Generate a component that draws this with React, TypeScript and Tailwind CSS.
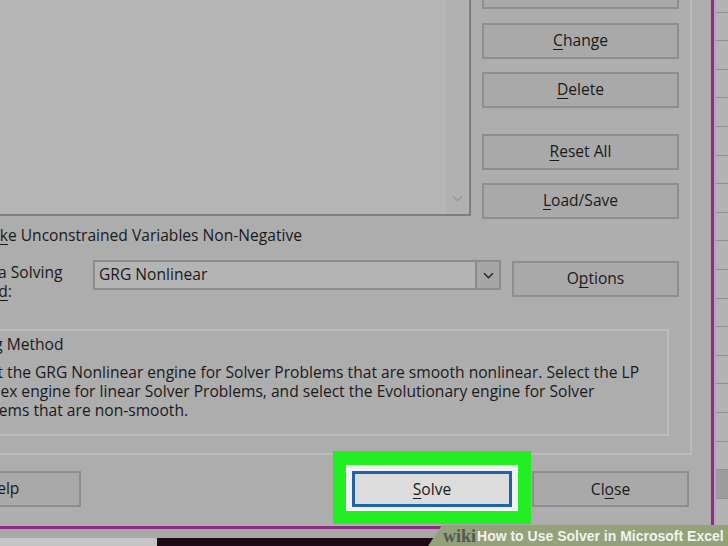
import type { ReactNode } from "react";

function Btn({ children, className = "" }: { children: ReactNode; className?: string }) {
  return (
    <div
      className={`flex h-[36px] shrink-0 items-center justify-center border-2 border-[#8e8e8e] bg-[#a9a9a9] text-[15.6px] text-[#1a1a1a] ${className}`}
    >
      {children}
    </div>
  );
}

function Key({ children }: { children: ReactNode }) {
  return <span className="underline decoration-1 underline-offset-[3px]">{children}</span>;
}

function Chevron({ className = "" }: { className?: string }) {
  return (
    <svg viewBox="0 0 12 8" className={className} fill="none" stroke="currentColor" strokeWidth="1.6">
      <polyline points="1,1.5 6,6.5 11,1.5" />
    </svg>
  );
}

const rows = Array.from({ length: 20 }, (_, i) => i);

export default function App() {
  return (
    <div className="relative h-[546px] w-[728px] overflow-hidden bg-[#a9a9a9] font-['Open_Sans',sans-serif] text-[#1a1a1a]">
      <div className="flex h-[529px]">
        {/* dialog */}
        <div className="flex w-[714px] shrink-0 flex-col border-r-[3px] border-b-[3px] border-[#8d2f7f] bg-[#adadad]">
          {/* inner panel */}
          <div className="flex h-[455px] w-[692px] flex-col border-r-2 border-b-2 border-[#bababa]">
            <div className="flex items-start">
              <div className="flex h-[216px] w-[471px] justify-end border-r-2 border-b-2 border-[#7f7f7f] bg-[#b5b5b5]">
                <div className="flex w-[23px] items-end justify-center bg-[#b1b1b1] pb-[12px]">
                  <Chevron className="h-[7px] w-[11px] text-[#999999]" />
                </div>
              </div>
              <div className="-mt-[27px] ml-[11px] flex w-[197px] flex-col">
                <Btn>Add</Btn>
                <Btn className="mt-[14px]">
                  <Key>C</Key>hange
                </Btn>
                <Btn className="mt-[13px]">
                  <Key>D</Key>elete
                </Btn>
                <Btn className="mt-[26px]">
                  <Key>R</Key>eset All
                </Btn>
                <Btn className="mt-[13px]">
                  <Key>L</Key>oad/Save
                </Btn>
              </div>
            </div>

            <div className="-ml-[23px] mt-[6px] whitespace-nowrap text-[15.6px] leading-[20px]">
              Ma<Key>k</Key>e Unconstrained Variables Non-Negative
            </div>

            <div className="mt-[15px] flex items-start">
              <div className="-ml-[49px] mt-[3px] w-[142px] shrink-0 whitespace-nowrap text-[15.6px] leading-[19px]">
                Select a Solving
                <br />
                Metho<Key>d</Key>:
              </div>
              <div className="flex h-[30px] w-[408px] border-2 border-[#8c8c8c] bg-[#b4b4b4]">
                <div className="flex flex-1 items-center pl-[4px] text-[15.6px]">GRG Nonlinear</div>
                <div className="flex w-[24px] items-center justify-center border-l-2 border-[#8c8c8c] bg-[#a6a6a6]">
                  <Chevron className="h-[7px] w-[11px] text-[#222222]" />
                </div>
              </div>
              <Btn className="ml-[11px] mt-[1px] w-[167px]">
                O<Key>p</Key>tions
              </Btn>
            </div>

            <div className="-ml-[60px] mt-[28px] h-[107px] w-[729px] shrink-0 border-2 border-[#bdbdbd] pl-[9px] pt-[3px]">
              <div className="whitespace-nowrap text-[15.6px] leading-[20px]">Solving Method</div>
              <div className="ml-[9px] mt-[9px] whitespace-nowrap text-[15.6px] leading-[19px]">
                Select the GRG Nonlinear engine for Solver Problems that are smooth nonlinear. Select the LP
                <br />
                Simplex engine for linear Solver Problems, and select the Evolutionary engine for Solver
                <br />
                problems that are non-smooth.
              </div>
            </div>
          </div>

          {/* bottom buttons */}
          <div className="flex flex-1 items-start">
            <Btn className="-ml-[76px] mt-[16px] h-[35px] w-[157px]">
              <Key>H</Key>elp
            </Btn>
            <div className="-mt-[4px] ml-[252px] h-[73px] w-[198px] shrink-0 bg-[#22ee22] px-[13px] pt-[14px]">
              <div className="h-[46px] bg-[#f2f2f2] px-[6px] pt-[6px]">
                <div className="flex h-[36px] items-center justify-center border-[3px] border-[#2163ab] bg-[#dcdcdc] pt-[1px] text-[15.6px]">
                  <Key>S</Key>olve
                </div>
              </div>
            </div>
            <Btn className="ml-[1px] mt-[16px] h-[35px] w-[157px] pt-[1px]">
              Cl<Key>o</Key>se
            </Btn>
          </div>
        </div>

        {/* worksheet cells behind */}
        <div className="flex flex-1 flex-col overflow-hidden border-l-2 border-[#c79ac0] bg-[#b3b3b3]">
          <div className="-mt-[16px] flex flex-col">
            {rows.map((r) => (
              <div
                key={r}
                className={`h-[28.6px] shrink-0 border-b border-[#8f8f8f] ${r === 17 ? "bg-[#9c9c9c]" : ""}`}
              />
            ))}
          </div>
        </div>
      </div>

      {/* strip below dialog */}
      <div className="flex h-[17px] flex-col">
        <div className="h-[9px] bg-[#a8a8a8]" />
        <div className="flex flex-1">
          <div className="w-[157px] bg-[#c4c4c4]" />
          <div className="flex-1 bg-[#1e0a16]" />
        </div>
      </div>

      {/* wikiHow caption */}
      <div className="absolute bottom-0 left-[428px] right-0 flex h-[21px] items-center bg-[#93a27b] pl-[15px] [clip-path:polygon(14px_0,100%_0,100%_100%,0_100%)]">
        <span className="font-['Liberation_Serif',serif] text-[18px] font-bold leading-none text-[#555555]">wiki</span>
        <span className="ml-[1px] whitespace-nowrap font-['Liberation_Sans',sans-serif] text-[14px] font-bold leading-none text-[#f1f3ee]">
          How to Use Solver in Microsoft Excel
        </span>
      </div>
    </div>
  );
}
